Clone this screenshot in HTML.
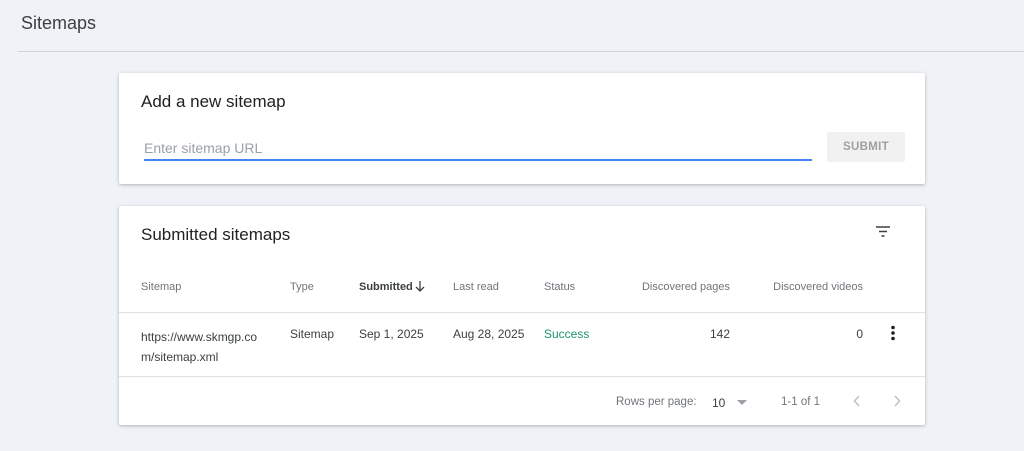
<!DOCTYPE html>
<html><head><style>
body{margin:0;width:1024px;height:451px;background:#eff2f7;font-family:"Liberation Sans",Arial,sans-serif;position:relative;overflow:hidden;color:#202124}
.a{position:absolute;white-space:nowrap}
.card{position:absolute;left:119px;width:806px;background:#fff;box-shadow:0 1px 3px rgba(60,64,67,.35);border-radius:2px}
.h{font-size:11px;color:#70757a}
.c{font-size:12px;color:#3c4043}
</style></head><body>
<div class="a" style="left:21px;top:13px;font-size:18px;color:#3c4043">Sitemaps</div>
<div class="a" style="left:18px;top:51px;width:1006px;height:1px;background:#cfd3d8"></div>

<div class="card" style="top:73px;height:111px">
<div class="a" style="left:22px;top:19px;font-size:17px;color:#202124">Add a new sitemap</div>
<div class="a" style="left:25px;top:67px;font-size:14px;color:#9aa0a6">Enter sitemap URL</div>
<div class="a" style="left:25px;top:86px;width:668px;height:2px;background:#4285f4"></div>
<div class="a" style="left:708px;top:59px;width:78px;height:30px;background:#f1f1f1;border-radius:2px;font-size:11.5px;color:#a0a0a0;text-align:center;line-height:30px;font-weight:bold;letter-spacing:.3px">SUBMIT</div>
</div>

<div class="card" style="top:206px;height:219px">
<div class="a" style="left:22px;top:19px;font-size:17px">Submitted sitemaps</div>
<svg class="a" style="left:756px;top:19px" width="16" height="14"><path d="M1 2h14M4 6.5h8M6.5 11h3" stroke="#3c4043" stroke-width="1.6"/></svg>
<div class="a h" style="left:22px;top:75px">Sitemap</div>
<div class="a h" style="left:171px;top:75px">Type</div>
<div class="a" style="left:240px;top:75px;font-size:11px;font-weight:bold;color:#3c4043">Submitted</div>
<svg class="a" style="left:296px;top:74px" width="10" height="12"><path d="M5 1v10M1 7l4 4 4-4" stroke="#3c4043" stroke-width="1.3" fill="none"/></svg>
<div class="a h" style="left:334px;top:75px">Last read</div>
<div class="a h" style="left:425px;top:75px">Status</div>
<div class="a h" style="left:470px;top:75px;width:141px;text-align:right">Discovered pages</div>
<div class="a h" style="left:600px;top:75px;width:144px;text-align:right">Discovered videos</div>
<div class="a" style="left:0;top:106px;width:806px;height:1px;background:#e0e0e0"></div>
<div class="a c" style="left:22px;top:121px;line-height:20px">https://www.skmgp.co<br>m/sitemap.xml</div>
<div class="a c" style="left:171px;top:121px">Sitemap</div>
<div class="a c" style="left:240px;top:121px">Sep 1, 2025</div>
<div class="a c" style="left:334px;top:121px">Aug 28, 2025</div>
<div class="a" style="left:425px;top:121px;font-size:12px;color:#1e9468">Success</div>
<div class="a c" style="left:500px;top:121px;width:111px;text-align:right">142</div>
<div class="a c" style="left:640px;top:121px;width:104px;text-align:right">0</div>
<svg class="a" style="left:771px;top:119px" width="6" height="16"><circle cx="3" cy="2.5" r="1.8" fill="#202124"/><circle cx="3" cy="8" r="1.8" fill="#202124"/><circle cx="3" cy="13.5" r="1.8" fill="#202124"/></svg>
<div class="a" style="left:0;top:170px;width:806px;height:1px;background:#e0e0e0"></div>
<div class="a" style="left:497px;top:190px;font-size:11.5px;color:#70757a">Rows per page:</div>
<div class="a c" style="left:593px;top:190px">10</div>
<svg class="a" style="left:617px;top:194px" width="12" height="6"><path d="M1 0h10L6 5z" fill="#9aa0a6"/></svg>
<div class="a" style="left:662px;top:190px;font-size:11.5px;color:#70757a">1-1 of 1</div>
<svg class="a" style="left:734px;top:189px" width="8" height="12"><path d="M6 1L1.5 6 6 11" stroke="#bdc1c6" stroke-width="1.5" fill="none"/></svg>
<svg class="a" style="left:774px;top:189px" width="8" height="12"><path d="M2 1l4.5 5L2 11" stroke="#bdc1c6" stroke-width="1.5" fill="none"/></svg>
</div>
</body></html>
